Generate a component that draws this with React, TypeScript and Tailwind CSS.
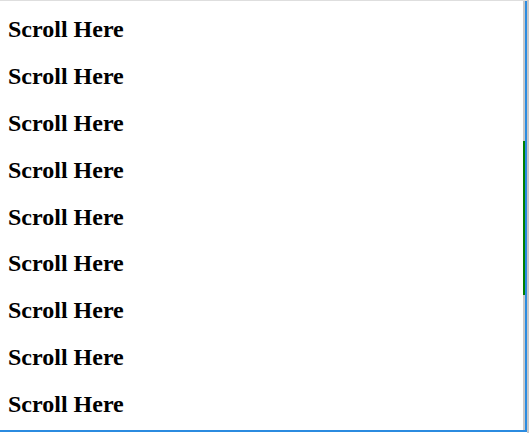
export default function App() {
  const items = Array.from({ length: 9 }, (_, i) => i);

  return (
    <div className="flex h-[433px] w-[529px] bg-white">
      <div className="flex flex-1 flex-col">
        {/* Top edge */}
        <div className="h-px bg-[#dedede]" />
        <div className="flex flex-1">
          {/* Content */}
          <div className="flex flex-1 flex-col gap-[19.9px] overflow-hidden pl-[8px] pt-[15px]">
            {items.map((i) => (
              <h2
                key={i}
                className="text-[24px] font-bold leading-[27px] text-black"
                style={{ fontFamily: '"Liberation Serif", "Times New Roman", serif' }}
              >
                Scroll Here
              </h2>
            ))}
          </div>
          {/* Scrollbar track */}
          <div className="flex w-[2px] flex-col bg-[#c8c8c8]">
            <div className="mt-[140px] h-[154px] bg-[#008000]" />
          </div>
          {/* Focus line */}
          <div className="w-[2px] bg-[#2b8be0]" />
        </div>
        <div className="h-[2px] bg-[#2b8be0]" />
        <div className="h-px bg-white" />
      </div>
      <div className="w-[2px] bg-[#c8c8c8]" />
    </div>
  );
}
